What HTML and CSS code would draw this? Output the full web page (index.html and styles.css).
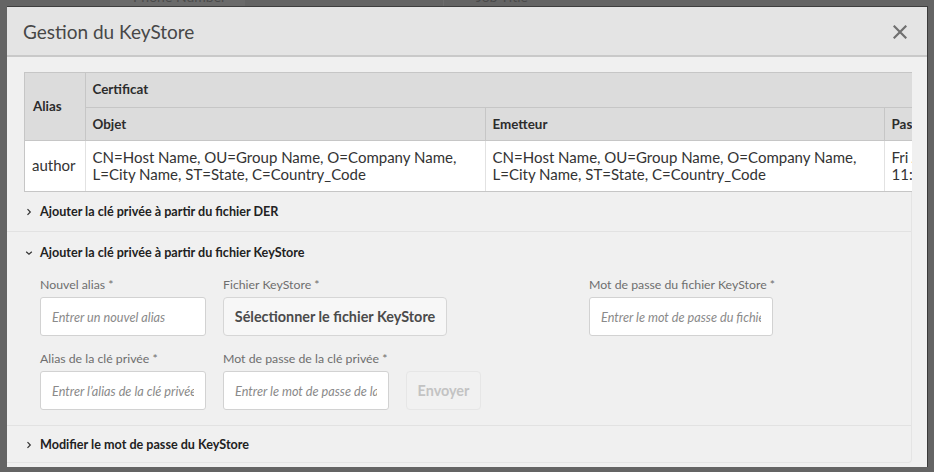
FILE: index.html
```html
<!DOCTYPE html>
<html lang="fr">
<head>
<meta charset="utf-8">
<title>Gestion du KeyStore</title>
<link rel="stylesheet" href="styles.css">
</head>
<body>
<div class="backdrop">
  <div class="bg-col bg-col-1"><span>Phone Number</span></div>
  <div class="bg-col bg-col-2"><span>Job Title</span></div>
</div>

<div class="dialog">
  <div class="dialog-header">
    <h1 class="dialog-title">Gestion du KeyStore</h1>
    <svg class="close-icon" width="14" height="14" viewBox="0 0 14 14"><path d="M1.5 1.5 L12.5 12.5 M12.5 1.5 L1.5 12.5" stroke="#707070" stroke-width="2.2" fill="none" stroke-linecap="square"/></svg>
  </div>
  <div class="dialog-body">
    <div class="content">
      <div class="table-wrap">
        <table class="cert-table">
          <colgroup>
            <col class="c-alias">
            <col class="c-obj">
            <col class="c-emet">
            <col class="c-pass">
          </colgroup>
          <thead>
            <tr class="hr1">
              <th rowspan="2" class="col-alias">Alias</th>
              <th colspan="3" class="th-group">Certificat</th>
            </tr>
            <tr class="hr2">
              <th>Objet</th>
              <th>Emetteur</th>
              <th>Passe</th>
            </tr>
          </thead>
          <tbody>
            <tr>
              <td class="col-alias">author</td>
              <td>CN=Host Name, OU=Group Name, O=Company Name,<br>L=City Name, ST=State, C=Country_Code</td>
              <td>CN=Host Name, OU=Group Name, O=Company Name,<br>L=City Name, ST=State, C=Country_Code</td>
              <td>Fri Jan 01<br>11:00:00</td>
            </tr>
          </tbody>
        </table>
      </div>

      <div class="accordion">
        <div class="acc-item">
          <div class="acc-head">
            <svg class="chev" width="8" height="8" viewBox="0 0 8 8"><path d="M2.5 1.2 L5.3 4 L2.5 6.8" stroke="#333" stroke-width="1.2" fill="none"/></svg>
            <span>Ajouter la clé privée à partir du fichier DER</span>
          </div>
        </div>
        <div class="acc-item">
          <div class="acc-head open">
            <svg class="chev" width="8" height="8" viewBox="0 0 8 8"><path d="M1.2 2.7 L4 5.3 L6.8 2.7" stroke="#333" stroke-width="1.2" fill="none"/></svg>
            <span>Ajouter la clé privée à partir du fichier KeyStore</span>
          </div>
          <div class="acc-body">
            <div class="form-row">
              <div class="field w166">
                <label class="lbl">Nouvel alias *</label>
                <div class="input"><span class="ph">Entrer un nouvel alias</span></div>
              </div>
              <div class="field w350">
                <label class="lbl">Fichier KeyStore *</label>
                <div class="btn btn-file">Sélectionner le fichier KeyStore</div>
              </div>
              <div class="field w184">
                <label class="lbl">Mot de passe du fichier KeyStore *</label>
                <div class="input"><span class="ph">Entrer le mot de passe du fichier KeyStore</span></div>
              </div>
            </div>
            <div class="form-row row2">
              <div class="field w166">
                <label class="lbl">Alias de la clé privée *</label>
                <div class="input"><span class="ph">Entrer l’alias de la clé privée</span></div>
              </div>
              <div class="field w166">
                <label class="lbl">Mot de passe de la clé privée *</label>
                <div class="input"><span class="ph">Entrer le mot de passe de la clé privée</span></div>
              </div>
              <div class="btn btn-disabled">Envoyer</div>
            </div>
          </div>
        </div>
        <div class="acc-item last">
          <div class="acc-head short">
            <svg class="chev" width="8" height="8" viewBox="0 0 8 8"><path d="M2.5 1.2 L5.3 4 L2.5 6.8" stroke="#333" stroke-width="1.2" fill="none"/></svg>
            <span>Modifier le mot de passe du KeyStore</span>
          </div>
        </div>
      </div>
    </div>
  </div>
</div>
</body>
</html>
```

FILE: styles.css
```css
* { box-sizing: border-box; }
html, body { margin: 0; padding: 0; }
body {
  width: 934px;
  height: 472px;
  background: #646464;
  font-family: "Lato", "Open Sans", sans-serif;
  overflow: hidden;
  position: relative;
}

.backdrop {
  display: flex;
  height: 6px;
  overflow: hidden;
}
.bg-col {
  height: 6px;
  position: relative;
  overflow: hidden;
  color: #4a4a4a;
  font-size: 14px;
}
.bg-col span { display: block; margin-top: -11px; line-height: 16px; }
.bg-col-1 {
  margin-left: 110px;
  width: 135px;
  background: #6a6a6a;
  padding-left: 23px;
}
.bg-col-2 {
  margin-left: 198px;
  width: 240px;
  padding-left: 32px;
  background: #646464;
  border-left: 1px solid #6c6c6c;
}

.dialog {
  position: absolute;
  left: 7px;
  top: 6px;
  width: 921px;
  height: 461px;
  background: #f0f0f0;
  border-top: 1px solid #3e3e3e;
  border-right: 1px solid #3a3a3a;
  display: flex;
  flex-direction: column;
}

.dialog-header {
  height: 50px;
  background: #e4e4e4;
  border-bottom: 2px solid #c9c9c9;
  display: flex;
  align-items: center;
  justify-content: space-between;
  padding: 0 20px 0 16px;
  flex: none;
}
.dialog-title {
  margin: 0;
  font-weight: 400;
  font-size: 19px;
  color: #474747;
}
.close-icon { display: block; margin-top: 1px; }

.dialog-body {
  flex: 1;
  display: flex;
  overflow: hidden;
}
.content {
  width: 905px;
  padding-top: 15px;
}

.table-wrap {
  margin-left: 17px;
  width: 888px;
  overflow: hidden;
  border: 1px solid #c6c6c6;
  border-right: none;
}
.cert-table {
  border-collapse: collapse;
  table-layout: fixed;
  width: 1000px;
  font-size: 15px;
  color: #333;
}
.c-alias { width: 60px; }
.c-obj { width: 400px; }
.c-emet { width: 399px; }
.c-pass { width: 141px; }
.cert-table th {
  background: #dcdcdc;
  font-weight: 700;
  font-size: 13.4px;
  color: #2c2c2c;
  text-align: left;
  padding: 0 7px;
  border-left: 1px solid #c6c6c6;
  border-top: 1px solid #c6c6c6;
  white-space: nowrap;
}
.hr1 th { height: 34px; }
.hr2 th { height: 33px; }
.cert-table tr:first-child th { border-top: none; }
.cert-table th.col-alias { border-left: none; padding-left: 8px; }
.cert-table th.th-group { padding-bottom: 2px; }
.cert-table td {
  background: #fff;
  height: 51px;
  padding: 0 7px;
  line-height: 17px;
  border-left: 1px solid #e2e2e2;
  border-top: 1px solid #c6c6c6;
  vertical-align: middle;
  white-space: nowrap;
  overflow: hidden;
}
.cert-table td.col-alias { border-left: none; }

.accordion {
  border-right: 1px solid #e4e4e4;
  border-bottom: 1px solid #e4e4e4;
  border-bottom-right-radius: 4px;
}
.acc-item { border-bottom: 1px solid #e2e2e2; }
.acc-item.last { border-bottom: none; }
.acc-head {
  height: 39px;
  display: flex;
  align-items: center;
  padding-left: 18px;
  font-size: 12.6px;
  font-weight: 700;
  color: #222;
}
.acc-head.open { height: 40px; padding-top: 1px; }
.acc-head.short { height: 36px; padding-top: 1px; }
.chev { display: block; margin-right: 7px; }

.acc-body {
  padding: 5px 0 15px 33px;
}
.form-row {
  display: flex;
  align-items: flex-end;
  gap: 17px;
}
.form-row.row2 { margin-top: 15px; }
.field { display: flex; flex-direction: column; }
.w166 { width: 166px; }
.w350 { width: 349px; }
.w184 { width: 184px; }
.lbl {
  font-size: 12.3px;
  line-height: 16px;
  color: #6e6e6e;
  margin-bottom: 4px;
  white-space: nowrap;
}
.input {
  height: 39px;
  background: #fff;
  border: 1px solid #d2d2d2;
  border-radius: 3px;
  padding: 0 11px;
  display: flex;
  align-items: center;
  font-size: 12.7px;
  font-style: italic;
  color: #8a8a8a;
}
.ph {
  display: block;
  width: 100%;
  white-space: nowrap;
  overflow: hidden;
}
.btn {
  height: 39px;
  border-radius: 4px;
  display: flex;
  align-items: center;
  justify-content: center;
  font-size: 14.4px;
  font-weight: 700;
  white-space: nowrap;
}
.btn-file {
  width: 224px;
  background: #f7f7f7;
  border: 1px solid #d6d6d6;
  color: #4b4b4b;
}
.btn-disabled {
  width: 75px;
  background: #f1f1f1;
  border: 1px solid #e6e6e6;
  color: #c3c3c3;
}
```
